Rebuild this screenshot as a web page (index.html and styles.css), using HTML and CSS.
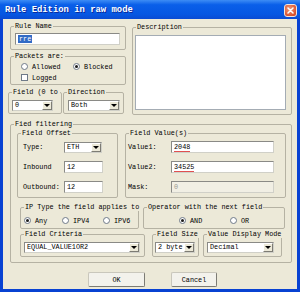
FILE: index.html
```html
<!DOCTYPE html>
<html lang="en">
<head>
  <meta charset="UTF-8" />
  <title>Rule Edition in raw mode</title>
  <link rel="stylesheet" href="styles.css">
</head>
<body>
  <div class="window">
    <div class="titlebar">
      <span class="title">Rule Edition in raw mode</span>
      <span class="close">
        <svg width="7" height="7" viewBox="0 0 7 7"><path d="M1 1 L6 6 M6 1 L1 6" stroke="#fff" stroke-width="1.5" stroke-linecap="round"/></svg>
      </span>
    </div>

    <div class="client">
      <div class="top">
        <div class="left-col">
          <fieldset class="grp rule-name">
            <legend>Rule Name</legend>
            <div class="edit w-name"><span class="sel">rre</span></div>
          </fieldset>

          <fieldset class="grp packets">
            <legend>Packets are:</legend>
            <div class="opt-row">
              <label class="opt w-allowed"><span class="radio"></span>Allowed</label>
              <label class="opt"><span class="radio on"></span>Blocked</label>
            </div>
            <div class="opt-row">
              <label class="opt"><span class="check"></span>Logged</label>
            </div>
          </fieldset>

          <div class="pair">
            <fieldset class="grp field-idx">
              <legend class="clip">Field (0 to 7)</legend>
              <div class="combo w-idx"><span class="val">0</span><span class="btn"></span></div>
            </fieldset>
            <fieldset class="grp direction">
              <legend>Direction</legend>
              <div class="combo w-dir"><span class="val">Both</span><span class="btn"></span></div>
            </fieldset>
          </div>
        </div>

        <fieldset class="grp description">
          <legend>Description</legend>
          <div class="memo"></div>
        </fieldset>
      </div>

      <fieldset class="grp filtering">
        <legend>Fied filtering</legend>

        <div class="frow row1">
          <fieldset class="grp offset">
            <legend>Field Offset</legend>
            <div class="line">
              <span class="lbl">Type:</span>
              <div class="combo w-type"><span class="val">ETH</span><span class="btn"></span></div>
            </div>
            <div class="line">
              <span class="lbl">Inbound</span>
              <div class="edit w-off">12</div>
            </div>
            <div class="line">
              <span class="lbl">Outbound:</span>
              <div class="edit w-off">12</div>
            </div>
          </fieldset>

          <fieldset class="grp values">
            <legend>Field Value(s)</legend>
            <div class="line">
              <span class="lbl">Value1:</span>
              <div class="edit w-val"><span class="typo">2048</span></div>
            </div>
            <div class="line">
              <span class="lbl">Value2:</span>
              <div class="edit w-val"><span class="typo">34525</span></div>
            </div>
            <div class="line">
              <span class="lbl">Mask:</span>
              <div class="edit w-val disabled">0</div>
            </div>
          </fieldset>
        </div>

        <div class="frow row2">
          <fieldset class="grp iptype">
            <legend>IP Type the field applies to</legend>
            <div class="opt-row">
              <label class="opt w-any"><span class="radio on"></span>Any</label>
              <label class="opt w-ipv4"><span class="radio"></span>IPV4</label>
              <label class="opt"><span class="radio"></span>IPV6</label>
            </div>
          </fieldset>
          <fieldset class="grp operator">
            <legend>Operator with the next field</legend>
            <div class="opt-row">
              <label class="opt w-and"><span class="radio on"></span>AND</label>
              <label class="opt"><span class="radio"></span>OR</label>
            </div>
          </fieldset>
        </div>

        <div class="frow row3">
          <fieldset class="grp criteria">
            <legend>Field Criteria</legend>
            <div class="combo w-crit"><span class="val">EQUAL_VALUE1OR2</span><span class="btn"></span></div>
          </fieldset>
          <fieldset class="grp fsize">
            <legend>Field Size</legend>
            <div class="combo w-size"><span class="val">2 byte</span><span class="btn"></span></div>
          </fieldset>
          <fieldset class="grp display">
            <legend>Value Display Mode</legend>
            <div class="combo w-disp"><span class="val">Decimal</span><span class="btn"></span></div>
          </fieldset>
        </div>
      </fieldset>

      <div class="buttons">
        <button class="btn-ok">OK</button>
        <button class="btn-cancel">Cancel</button>
      </div>
    </div>
  </div>
</body>
</html>
```

FILE: styles.css
```css
:root {
  --face: #ece9d8;
  --frame: #b5b2a3;
  --xp-blue: #0842d2;
}

* {
  box-sizing: border-box;
}

body {
  margin: 0;
  font-family: "Liberation Mono", "DejaVu Sans Mono", monospace;
  font-size: 6.8px;
  color: #000;
}

.window {
  width: 300px;
  height: 292px;
  background: var(--xp-blue);
  display: flex;
  flex-direction: column;
}

.titlebar {
  height: 19px;
  display: flex;
  align-items: center;
  justify-content: space-between;
  padding: 0 3px 0 5px;
  background: linear-gradient(#3d8cf5, #0a5fe9 25%, #0657e2 75%, #0a4bd3);
  color: #fff;
}

.title {
  font-size: 8.9px;
  font-weight: bold;
  text-shadow: 1px 1px 0 #0b2a9a;
}

.close {
  width: 13px;
  height: 13px;
  margin-top: 1px;
  border: 1px solid #f3e4dc;
  border-radius: 3px;
  background: radial-gradient(circle at 40% 35%, #f09a7a, #dc5530 70%, #c8431f);
  display: flex;
  align-items: center;
  justify-content: center;
}

.client {
  flex: 1;
  margin: 0 3px 3px;
  background: var(--face);
  padding: 3px 5px 0 7px;
}

/* group boxes: the legend follows padding-left, so inner offsets go on children */
.grp {
  margin: 0;
  padding: 0;
  min-width: 0;
  border: 1px solid var(--frame);
  border-radius: 2px;
}

.grp legend {
  height: 8px;
  line-height: 8px;
  padding: 0 1px;
  margin-left: 3px;
  white-space: nowrap;
}

.grp legend.clip {
  max-width: 48px;
  overflow: hidden;
}

.top {
  display: flex;
}

.left-col {
  width: 116px;
  display: flex;
  flex-direction: column;
}

.rule-name {
  padding: 3px 0 4px;
}

.packets {
  margin-top: 2px;
  padding: 1px 0;
}

.packets .opt-row { margin-left: 10px; }

.pair {
  display: flex;
  margin: 3px 0 0 -2px;
}

.field-idx {
  width: 54px;
  padding: 4px 0 2px;
}

.direction {
  width: 61px;
  margin-left: 1px;
  padding: 4px 0 2px;
}

.description {
  width: 160px;
  margin: 1px 0 0 6px;
  padding: 4px 5px 4px 0;
}

.memo {
  height: 75px;
  margin-left: 2px;
  background: #fff;
  border: 1px solid #a4acb4;
}

/* field filtering */
.filtering {
  margin-top: 5px;
  padding: 0 5px 5px 0;
}

.frow {
  display: flex;
  margin-left: 6px;
}

.row1 {
  margin-top: 1px;
}

.offset {
  width: 101px;
}

.offset .line { padding-left: 5px; }

.values {
  width: 161px;
  margin-left: 7px;
}

.values .line { padding-left: 2px; }

.line {
  display: flex;
  align-items: center;
  height: 20px;
}

.offset .lbl { width: 41px; }
.values .lbl { width: 43px; }

.row2 {
  margin: 5px 0 0 9px;
}

.iptype {
  width: 119px;
  padding: 3px 0 1px;
}

.iptype .opt-row { margin-left: 3px; }

.operator {
  width: 142px;
  margin-left: 4px;
  padding: 3px 0 1px;
}

.operator .opt-row { margin-left: 35px; }

.row3 {
  margin: 1px 0 0 9px;
}

.criteria {
  width: 125px;
  padding: 4px 0 3px;
}

.fsize {
  width: 47px;
  margin-left: 7px;
  padding: 4px 0 3px;
}

.display {
  width: 79px;
  margin-left: 4px;
  padding: 4px 0 3px;
}

/* controls */
.edit {
  height: 12px;
  line-height: 10px;
  padding-left: 2px;
  background: #fff;
  border: 1px solid #8a8a86;
  border-color: #8a8a86 #d0d0c8 #d0d0c8 #8a8a86;
}

.edit.disabled {
  background: #f1efe4;
  color: #9a9a92;
}

.sel {
  background: #316ac5;
  color: #fff;
  padding: 0 1px;
}

.typo {
  border-bottom: 1px solid #e05050;
}

.w-name { width: 105px; margin-left: 4px; }
.w-off { width: 39px; }
.w-val { width: 103px; }

.combo {
  display: flex;
  height: 11px;
  background: #fff;
  border: 1px solid #8a8a86;
  border-color: #8a8a86 #d0d0c8 #d0d0c8 #8a8a86;
}

.combo .val {
  flex: 1;
  padding-left: 2px;
  line-height: 9px;
  overflow: hidden;
  white-space: nowrap;
}

.combo .btn {
  width: 10px;
  background: var(--face);
  border: 1px solid #fff;
  border-color: #fff #7d7c74 #7d7c74 #fff;
  display: flex;
  align-items: center;
  justify-content: center;
}

.combo .btn::after {
  content: "";
  border-top: 3px solid #000;
  border-left: 3px solid transparent;
  border-right: 3px solid transparent;
}

.w-idx { width: 41px; margin-left: 3px; }
.w-dir { width: 52px; margin-left: 4px; }
.w-type { width: 38px; }
.w-crit { width: 116px; margin-left: 3px; }
.w-size { width: 40px; margin-left: 2px; }
.w-disp { width: 67px; margin-left: 3px; }

.opt-row {
  display: flex;
  align-items: center;
  height: 11px;
}

.iptype .opt-row,
.operator .opt-row {
  height: 13px;
}

.opt {
  display: flex;
  align-items: center;
  gap: 4px;
}

.w-allowed { width: 52px; }
.w-any { width: 38px; }
.w-ipv4 { width: 41px; }
.w-and { width: 51px; }

.radio {
  width: 7px;
  height: 7px;
  border-radius: 50%;
  border: 1px solid #6f7a88;
  background: #fff;
  display: flex;
  align-items: center;
  justify-content: center;
}

.radio.on::after {
  content: "";
  width: 3px;
  height: 3px;
  border-radius: 50%;
  background: #1b1b1b;
}

.check {
  width: 7px;
  height: 7px;
  border: 1px solid #6f7a88;
  background: #fff;
}

/* buttons */
.buttons {
  display: flex;
  margin-top: 9px;
  padding-left: 78px;
  gap: 26px;
}

.buttons button {
  height: 15px;
  padding: 0;
  font-family: inherit;
  font-size: 6.8px;
  color: #000;
  background: #f3f2ec;
  border: 1px solid #8d8c84;
  border-color: #c9c7bc #7c7b74 #7c7b74 #c9c7bc;
  border-radius: 2px;
}

.btn-ok { width: 57px; }
.btn-cancel { width: 46px; }
```
